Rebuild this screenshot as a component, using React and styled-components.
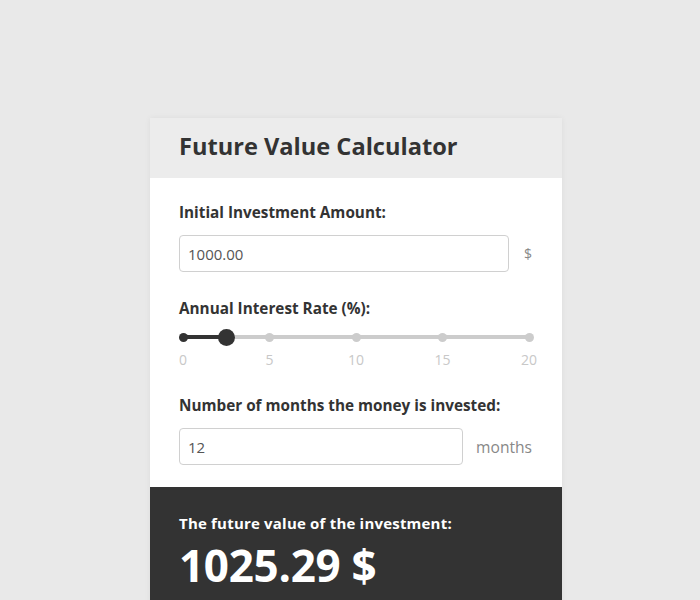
import React from "react";
import styled, { createGlobalStyle } from "styled-components";

const Global = createGlobalStyle`
  html, body { margin: 0; padding: 0; background: #e9e9e9; }
  body { font-family: "Open Sans", "Liberation Sans", sans-serif; color: #333; }
  * { box-sizing: border-box; }
`;

const Page = styled.div`
  width: 700px;
  height: 600px;
  overflow: hidden;
  padding: 118px 0 0 150px;
`;

const Card = styled.div`
  width: 412px;
  background: #fff;
  box-shadow: 0 0 6px rgba(0, 0, 0, 0.06);
`;

const Header = styled.div`
  height: 60px;
  background: #ececec;
  display: flex;
  align-items: center;
  padding: 0 29px;
`;

const Title = styled.h1`
  margin: 0;
  font-size: 23.6px;
  font-weight: 700;
  color: #333;
  line-height: 1;
  padding-bottom: 2px;
`;

const Body = styled.div`
  padding: 24px 29px 22px;
  display: flex;
  flex-direction: column;
`;

const Field = styled.div`
  display: flex;
  flex-direction: column;
  margin-top: ${(p) => p.$mt || 0}px;
`;

const Label = styled.label`
  font-size: 15.3px;
  font-weight: 700;
  color: #333;
  line-height: 20px;
  margin-bottom: ${(p) => p.$mb ?? 13}px;
`;

const Row = styled.div`
  display: flex;
  align-items: center;
  gap: 13px;
`;

const Input = styled.input`
  flex: 1;
  min-width: 0;
  height: 37px;
  border: 1px solid #d0d0d0;
  border-radius: 4px;
  padding: 0 8px;
  font-family: "Open Sans", "Liberation Sans", sans-serif;
  font-size: 15px;
  color: #555;
  outline: none;
`;

const Suffix = styled.span`
  font-size: ${(p) => (p.$small ? 14 : 15.6)}px;
  color: #888888;
  padding-right: 1px;
  padding-left: ${(p) => p.$pl || 0}px;
`;

const Slider = styled.div`
  position: relative;
  height: 16px;
  margin: 0 4px;
`;

const Track = styled.div`
  position: absolute;
  left: 0;
  right: 0;
  top: 6px;
  height: 4px;
  background: #cccccc;
  border-radius: 2px;
`;

const Fill = styled.div`
  position: absolute;
  left: 0;
  top: 6px;
  height: 4px;
  background: #333;
`;

const Dot = styled.div`
  position: absolute;
  top: 3.5px;
  width: 9px;
  height: 9px;
  margin-left: -4.5px;
  border-radius: 50%;
  background: ${(p) => (p.$active ? "#333" : "#cccccc")};
`;

const Thumb = styled.div`
  position: absolute;
  top: 0;
  width: 17px;
  height: 17px;
  margin-left: -8.5px;
  margin-top: -0.5px;
  border-radius: 50%;
  background: #333;
`;

const Ticks = styled.div`
  position: relative;
  height: 18px;
  margin: 6px 4px 0;
`;

const Tick = styled.span`
  position: absolute;
  top: 0;
  transform: translateX(-50%);
  font-size: 14px;
  line-height: 18px;
  color: #c8c8c8;
`;

const Result = styled.div`
  background: #333333;
  padding: 26px 29px 30px;
  color: #fff;
`;

const ResultLabel = styled.div`
  font-size: 15px;
  font-weight: 700;
  line-height: 20px;
  letter-spacing: 0.2px;
`;

const ResultValue = styled.div`
  font-size: 44px;
  font-weight: 700;
  line-height: 56px;
  margin-top: 4px;
  letter-spacing: -0.3px;
`;

const ticks = [0, 5, 10, 15, 20];
const value = 2.5;
const max = 20;

export default function App() {
  const pct = (v) => `${(v / max) * 100}%`;
  return (
    <>
      <Global />
      <Page>
        <Card>
          <Header>
            <Title>Future Value Calculator</Title>
          </Header>
          <Body>
            <Field>
              <Label>Initial Investment Amount:</Label>
              <Row>
                <Input defaultValue="1000.00" />
                <Suffix $small $pl={2}>$</Suffix>
              </Row>
            </Field>
            <Field $mt={26}>
              <Label $mb={11}>Annual Interest Rate (%):</Label>
              <Slider>
                <Track />
                <Fill style={{ width: pct(value) }} />
                {ticks.map((t) => (
                  <Dot key={t} $active={t <= value} style={{ left: pct(t) }} />
                ))}
                <Thumb style={{ left: pct(value) }} />
              </Slider>
              <Ticks>
                {ticks.map((t) => (
                  <Tick key={t} style={{ left: pct(t) }}>
                    {t}
                  </Tick>
                ))}
              </Ticks>
            </Field>
            <Field $mt={26}>
              <Label>Number of months the money is invested:</Label>
              <Row>
                <Input defaultValue="12" />
                <Suffix>months</Suffix>
              </Row>
            </Field>
          </Body>
          <Result>
            <ResultLabel>The future value of the investment:</ResultLabel>
            <ResultValue>1025.29 $</ResultValue>
          </Result>
        </Card>
      </Page>
    </>
  );
}
